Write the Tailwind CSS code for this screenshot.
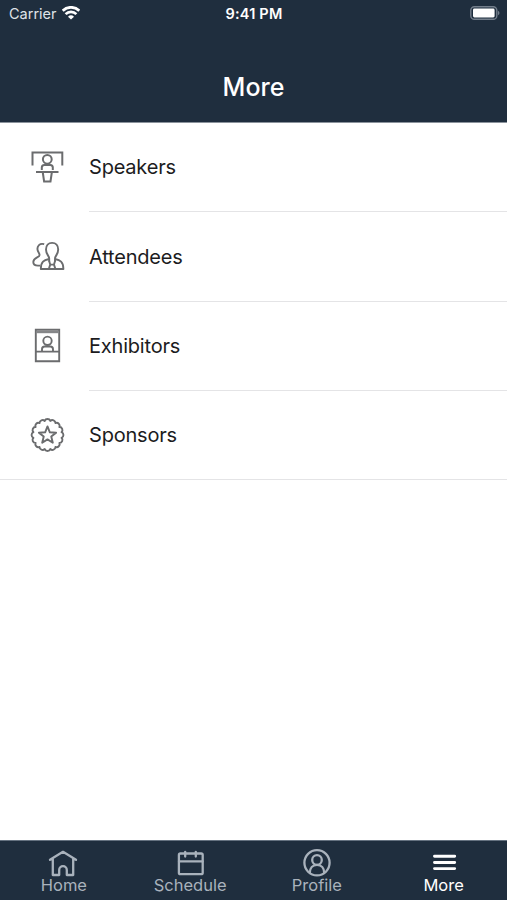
<!DOCTYPE html>
<html lang="en">
<head>
  <meta charset="UTF-8">
  <meta name="viewport" content="width=device-width, initial-scale=1.0">
  <title>More</title>
  <script src="https://cdn.jsdelivr.net/npm/@tailwindcss/browser@4"></script>
</head>
<body class="bg-white font-['Inter','Liberation_Sans',sans-serif] antialiased">
  <div class="flex flex-col w-[507px] h-[900px] overflow-hidden">

    <!-- Header -->
    <header class="flex flex-col h-[123px] bg-[#1f2e3e] text-white border-b border-[#8b939c]">
      <div class="grid grid-cols-3 items-center h-[27px] pl-[9px] pr-[7px]">
        <div class="flex items-center gap-[5px]">
          <span class="pt-px text-[14.5px] leading-none text-[#dfe3e8]">Carrier</span>
          <svg class="w-[18px] h-[14px] -mt-px" viewBox="0 0 18 14" fill="none" stroke="#fff" stroke-width="2.7">
            <path d="M.7 4.7a11.8 11.8 0 0 1 16.6 0"/>
            <path d="M3.6 8.1a7.6 7.6 0 0 1 10.8 0"/>
            <path d="M9 13.6 6 10.7a4.3 4.3 0 0 1 6 0z" fill="#fff" stroke="none"/>
          </svg>
        </div>
        <span class="pt-px pr-px text-center text-[14.5px] leading-none font-semibold tracking-[0.2px] whitespace-nowrap">9:41 PM</span>
        <svg class="justify-self-end w-[30px] h-[14px] -mt-px" viewBox="0 0 30 14">
          <rect x=".8" y=".7" width="26" height="12.6" rx="3.6" fill="none" stroke="#737e8b" stroke-width="1.4"/>
          <rect x="3" y="2.6" width="21.6" height="8.8" rx="1.4" fill="#fff"/>
          <path d="M28 4.8c2 .8 2 3.6 0 4.4z" fill="#737e8b"/>
        </svg>
      </div>
      <h1 class="mt-[44px] text-center text-[25px] leading-8 font-medium">More</h1>
    </header>

    <!-- Menu -->
    <main class="flex-1">
      <ul class="border-b border-[#e4e4e6] text-[20px] tracking-[-0.2px] text-[#1c1c1e]">
        <li class="flex h-[89px] pl-[29px]">
          <svg class="w-9 h-9 mt-[26px] mr-6 shrink-0" viewBox="9 9 36 36" fill="none" stroke="#6b6c6e" stroke-width="2">
            <path d="M12.5 25.5v-13h29.8v13"/>
            <circle cx="27.3" cy="19.3" r="4.4"/>
            <path d="M21.8 30v-2.5q0-2.5 2.5-2.5h6q2.5 0 2.5 2.5V30"/>
            <path d="M16 32h22.5M22.8 32.5l1.3 9h6.4l1.3-9"/>
          </svg>
          <span class="flex flex-1 items-center border-b border-[#e4e4e6]">Speakers</span>
        </li>
        <li class="flex h-[90px] pl-[29px]">
          <svg class="w-9 h-9 mt-[26px] mr-6 shrink-0" viewBox="9 8 36 36" fill="none" stroke="#6b6c6e" stroke-width="1.9" stroke-linejoin="round">
            <path d="M24.2 14.2c-4.400-1.300-7.400 1.800-6.600 5.800.4 2.200 2 3 2 5 0 2.600-6.300 2.400-6.300 7 0 2.400 1 3.600 4.700 3.600h2"/>
            <path d="M29.2 31.500v-3c0-2.800-3.200-4-3.200-9 0-4 2.400-6.600 6.100-6.600s6.100 2.600 6.100 6.600c0 5-3.200 6.200-3.200 9v3"/>
            <path d="M29 29c-5 1.200-8.200 2.600-8.200 10h22.600c0-7.400-3.400-8.800-8.400-10"/>
            <path d="M29 30.500 30.200 34.600h3.800l1.200-4.100M30.200 34.600 28.800 39M34 34.600l1.400 4.400"/>
          </svg>
          <span class="flex flex-1 items-center border-b border-[#e4e4e6]">Attendees</span>
        </li>
        <li class="flex h-[89px] pl-[29px]">
          <svg class="w-9 h-9 mt-[26px] mr-6 shrink-0" viewBox="9 13 36 36" fill="none" stroke="#6b6c6e" stroke-width="1.9">
            <path d="M15.8 14.8h23.4v31.4H15.8z"/>
            <path d="M16 17h23" stroke-width="2.4" stroke="#858688"/>
            <circle cx="27.5" cy="25.8" r="4.2"/>
            <path d="M22 36v-1.8q0-2.700 2.700-2.700h5.600q2.700 0 2.700 2.700V36M16 36.600h23"/>
          </svg>
          <span class="flex flex-1 items-center border-b border-[#e4e4e6]">Exhibitors</span>
        </li>
        <li class="flex h-[88px] pl-[29px]">
          <svg class="w-9 h-9 mt-[26px] mr-6 shrink-0" viewBox="-18.5 -18 36 36" fill="none" stroke="#6b6c6e" stroke-width="1.9" stroke-linejoin="round">
            <path id="badgeEdge"/>
            <path d="M0-8.600 2.350-2.700 8.600-2.300 3.750 1.600 5.300 7.700 0 4.400-5.300 7.700-3.750 1.600-8.600-2.300-2.350-2.700z"/>
          </svg>
          <span class="flex flex-1 items-center">Sponsors</span>
        </li>
      </ul>
    </main>

    <!-- Tab bar -->
    <nav class="grid grid-cols-4 h-[60px] bg-[#1f2e3e] border-t border-[#657280] text-[16.5px] leading-5 text-[#a9b2bc]">
      <a class="flex flex-col items-center pt-2">
        <svg class="w-[30px] h-7" viewBox="0 0 30 28" fill="none" stroke="currentColor" stroke-width="2.3" stroke-linecap="round" stroke-linejoin="round">
          <path d="M2 10.800 15 2.800l13 8M4.800 10v16h6.400v-5a3.800 3.800 0 0 1 7.600 0v5h6.400V10"/>
        </svg>
        <span class="-mt-0.5 pl-px">Home</span>
      </a>
      <a class="flex flex-col items-center pt-2">
        <svg class="w-[30px] h-7" viewBox="0 0 30 28" fill="none" stroke="currentColor" stroke-width="2.3" stroke-linecap="round">
          <rect x="3.900" y="4.500" width="23.800" height="20.700" rx="1.500"/>
          <path d="M4 12.400h23.600M10.200 2.800v4.800M20.800 2.800v4.800"/>
        </svg>
        <span class="-mt-0.5">Schedule</span>
      </a>
      <a class="flex flex-col items-center pt-2">
        <svg class="w-[30px] h-7" viewBox="0 0 30 28" fill="none" stroke="currentColor" stroke-width="2.3">
          <circle cx="15" cy="13.800" r="12.600"/>
          <circle cx="15" cy="11" r="4.800"/>
          <path d="M7.800 24c0-5 3-8.200 7.200-8.200s7.200 3.200 7.200 8.200"/>
        </svg>
        <span class="-mt-0.5">Profile</span>
      </a>
      <a class="flex flex-col items-center pt-2 text-white">
        <svg class="w-[30px] h-7" viewBox="0 0 30 28" fill="none" stroke="currentColor" stroke-width="2.9" stroke-linecap="round">
          <path d="M5.500 7.200h20.200M5.500 13.500h20.200M5.500 19.600h20.200"/>
        </svg>
        <span class="-mt-0.5">More</span>
      </a>
    </nav>
  </div>

  <script>
    // Scalloped outline of the sponsor badge
    const bumps = 16;
    const radius = 14.3;
    let d = '';
    for (let i = 0; i <= bumps; i++) {
      const angle = (i + 0.5) * 2 * Math.PI / bumps;
      const point = (radius * Math.cos(angle)).toFixed(2) + ' ' + (radius * Math.sin(angle)).toFixed(2);
      d += i === 0 ? 'M' + point : 'A3 3 0 0 1 ' + point;
    }
    document.getElementById('badgeEdge').setAttribute('d', d + 'z');
  </script>
</body>
</html>
